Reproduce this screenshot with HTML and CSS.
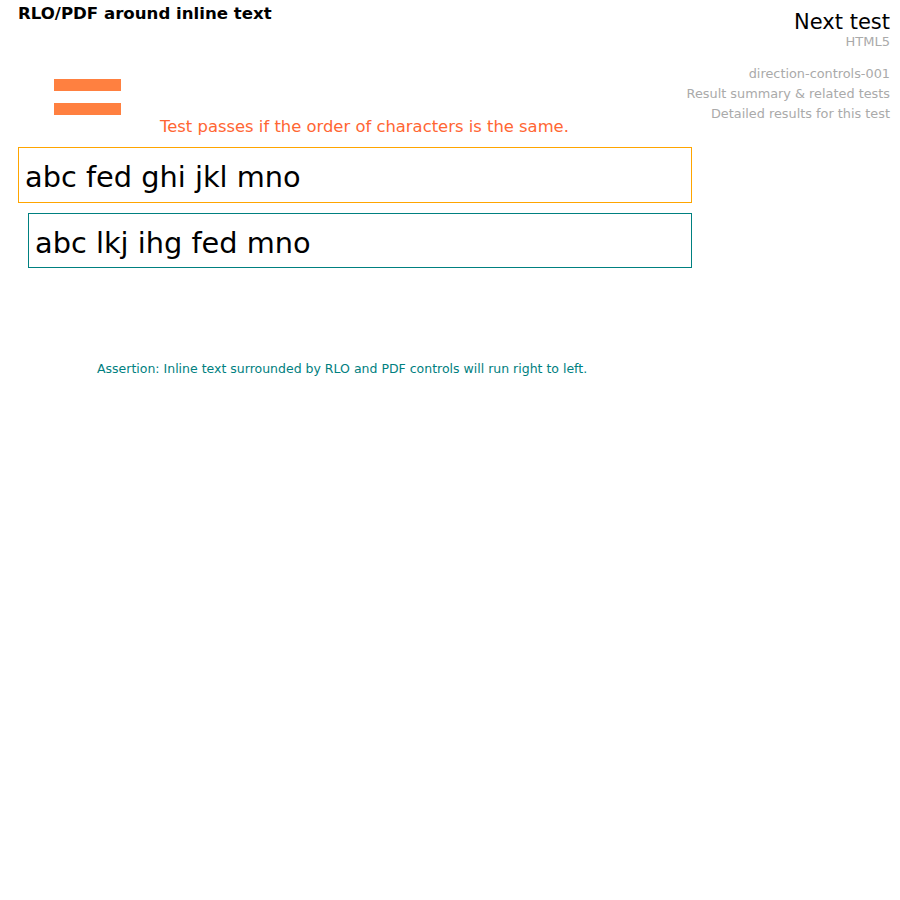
FILE: index.html
```html
<!DOCTYPE html>
<html>
<head>
<meta charset="utf-8">
<title>RLO/PDF around inline text</title>
<link rel="stylesheet" href="styles.css">
</head>
<body>
<div class="page">
  <div class="side">
    <div class="next">Next test</div>
    <div class="spec">HTML5</div>
    <ul class="links">
      <li>direction-controls-001</li>
      <li>Result summary &amp; related tests</li>
      <li>Detailed results for this test</li>
    </ul>
  </div>
  <div class="main">
    <h1 class="title">RLO/PDF around inline text</h1>
    <div class="equals">
      <div class="bar"></div>
      <div class="bar"></div>
    </div>
    <p class="instructions">Test passes if the order of characters is the same.</p>
    <div class="box box-test">abc fed ghi jkl mno</div>
    <div class="box box-ref">abc lkj ihg fed mno</div>
    <p class="assertion">Assertion: Inline text surrounded by RLO and PDF controls will run right to left.</p>
  </div>
</div>
</body>
</html>
```
FILE: styles.css
```css
html, body {
  margin: 0;
  padding: 0;
  background: #fff;
}
body {
  font-family: "DejaVu Sans", sans-serif;
  color: #000;
}
.page {
  padding: 0 10px 0 18px;
}
.main {
  width: 674px;
}
.title {
  margin: 0;
  padding-top: 4px;
  font-size: 16.6px;
  line-height: 20px;
  font-weight: bold;
}
.equals {
  margin: 55px 0 0 36px;
  display: flex;
  flex-direction: column;
  gap: 12px;
  width: 67px;
}
.bar {
  height: 12px;
  background: #ff8040;
}
.instructions {
  margin: 0;
  padding: 1px 0 0 142px;
  height: 21px;
  font-size: 16.4px;
  line-height: 22px;
  color: #ff6633;
}
.box {
  box-sizing: border-box;
  font-size: 28.8px;
  line-height: 40px;
  padding: 9px 6px 5px;
}
.box-test {
  margin-top: 10px;
  height: 56px;
  border: 1px solid orange;
}
.box-ref {
  margin: 10px 0 0 10px;
  height: 55px;
  border: 1px solid teal;
}
.assertion {
  margin: 91px 0 0 79px;
  font-size: 12.5px;
  line-height: 20px;
  color: teal;
}
.side {
  float: right;
  text-align: right;
  white-space: nowrap;
  padding-top: 10px;
}
.next {
  font-size: 21px;
  line-height: 24px;
}
.spec {
  font-size: 13px;
  line-height: 16px;
  color: #aaa;
}
.links {
  list-style: none;
  margin: 14px 0 0;
  padding: 0;
  font-size: 12.85px;
  line-height: 20px;
  color: #aaa;
}
```
